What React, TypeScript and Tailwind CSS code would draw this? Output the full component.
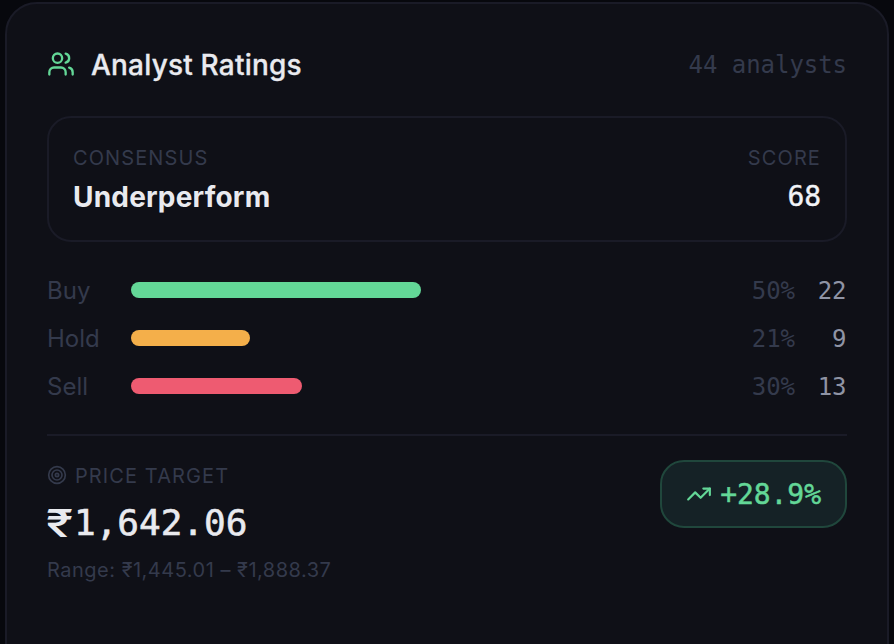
import { Target, TrendingUp, Users } from "lucide-react";

const MONO = "font-['DejaVu_Sans_Mono',monospace]";

const ratings = [
  { label: "Buy", share: 50, count: 22, width: 290, color: "bg-[#63d797]" },
  { label: "Hold", share: 21, count: 9, width: 119, color: "bg-[#f4af4a]" },
  { label: "Sell", share: 30, count: 13, width: 171, color: "bg-[#ee5b71]" },
];

export default function App() {
  return (
    <div className="h-[644px] w-[894px] overflow-hidden bg-[#07080d] pl-[5px] pt-[2px] font-['Inter',sans-serif] text-[#343a4c]">
      <section className="h-[700px] w-[884px] rounded-[32px] border-2 border-[#1a1b27] bg-[#0f1017] px-10 pt-[38px]">
        <header className="flex h-11 items-center justify-between">
          <div className="flex items-center gap-4">
            <Users size={28} strokeWidth={2} className="text-[#63d797]" />
            <h2 className="pt-0.5 text-[28px] leading-10 font-medium tracking-[0.2px] text-[#e9eaef] [-webkit-text-stroke:0.3px]">Analyst Ratings</h2>
          </div>
          <span className={`${MONO} pt-0.5 text-[24px] tracking-[-0.05px]`}>44 analysts</span>
        </header>

        <div className="mt-[30px] flex h-[126px] justify-between rounded-[24px] border-2 border-[#1a1b27] px-6 pt-[25px]">
          <div>
            <div className="text-[20px] leading-[30px] tracking-[1.1px]">CONSENSUS</div>
            <div className="mt-1 text-[28px] leading-10 font-bold tracking-[0.2px] text-[#e9eaef]">Underperform</div>
          </div>
          <div className="text-right">
            <div className="text-[20px] leading-[30px] tracking-[1.1px]">SCORE</div>
            <div className={`${MONO} mt-1 text-[28px] leading-10 tracking-[-0.05px] text-[#f2f3f7] [-webkit-text-stroke:0.4px]`}>68</div>
          </div>
        </div>

        <div className="mt-[33px] flex flex-col gap-4">
          {ratings.map((r) => (
            <div key={r.label} className="flex h-8 items-center">
              <span className="w-[84px] text-[24px] leading-8">{r.label}</span>
              <div className="-mt-0.5 flex-1">
                <div className={`h-4 rounded-full ${r.color}`} style={{ width: r.width }} />
              </div>
              <span className={`${MONO} text-[24px] leading-8 tracking-[-0.05px]`}>{r.share}%</span>
              <span className={`${MONO} w-[52px] pr-[0.5px] text-right text-[24px] leading-8 tracking-[-0.05px] text-[#8f94a5]`}>
                {r.count}
              </span>
            </div>
          ))}
        </div>

        <div className="mt-[31px] flex items-start justify-between border-t-2 border-[#1a1b27] pt-6">
          <div>
            <div className="flex h-[30px] items-center gap-2">
              <Target size={20} strokeWidth={2} />
              <span className="pt-0.5 text-[20px] leading-[30px] tracking-[1.1px]">PRICE TARGET</span>
            </div>
            <div className="mt-1.5 flex h-[54px] items-center text-[36px] leading-[54px] text-[#e9eaef]">
              <span className="-ml-[1px] w-7 origin-left scale-x-[1.3] text-[38px] font-medium">₹</span>
              <span className={`${MONO} [-webkit-text-stroke:0.6px]`}>1,642.06</span>
            </div>
            <div className="mt-[5px] text-[20px] leading-[30px] tracking-[0.5px]">Range: ₹1,445.01 – ₹1,888.37</div>
          </div>
          <div className="flex h-[68px] items-center gap-2 rounded-[24px] border-2 border-[#20473c] bg-[#152226] px-6 text-[#63d797]">
            <TrendingUp size={26} strokeWidth={2} />
            <span className={`${MONO} pt-0.5 text-[28px] leading-10 tracking-[-0.05px] [-webkit-text-stroke:0.5px]`}>+28.9%</span>
          </div>
        </div>
      </section>
    </div>
  );
}
